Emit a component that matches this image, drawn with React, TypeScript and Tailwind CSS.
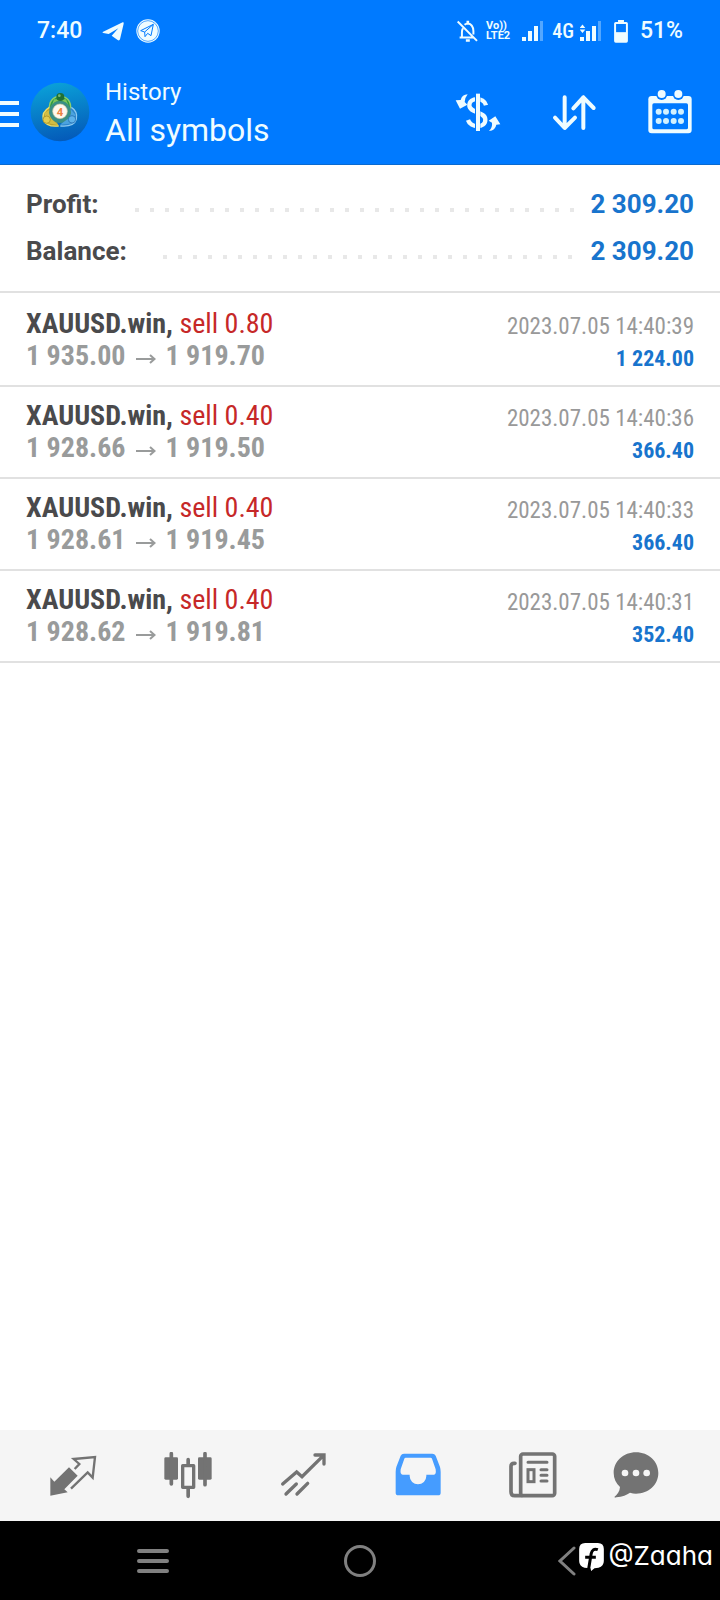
import type { ReactNode } from "react";
import { clsx } from "clsx";

type Deal = {
  symbol: string;
  side: string;
  open: string;
  close: string;
  time: string;
  profit: string;
};

const deals: Deal[] = [
  { symbol: "XAUUSD.win,", side: "sell 0.80", open: "1 935.00", close: "1 919.70", time: "2023.07.05 14:40:39", profit: "1 224.00" },
  { symbol: "XAUUSD.win,", side: "sell 0.40", open: "1 928.66", close: "1 919.50", time: "2023.07.05 14:40:36", profit: "366.40" },
  { symbol: "XAUUSD.win,", side: "sell 0.40", open: "1 928.61", close: "1 919.45", time: "2023.07.05 14:40:33", profit: "366.40" },
  { symbol: "XAUUSD.win,", side: "sell 0.40", open: "1 928.62", close: "1 919.81", time: "2023.07.05 14:40:31", profit: "352.40" },
];

const summary = [
  { label: "Profit:", value: "2 309.20" },
  { label: "Balance:", value: "2 309.20" },
];

function Icon({ children }: { children: ReactNode }) {
  return (
    <svg viewBox="0 0 144 144" className="size-12" fill="none" aria-hidden="true">
      {children}
    </svg>
  );
}

function Signal({ data = false }: { data?: boolean }) {
  return (
    <svg viewBox="0 0 22 20" className="h-5 w-[22px]" fill="currentColor" aria-hidden="true">
      <rect x="0" y="16" width="4" height="4" />
      <rect x="6" y="10" width="4" height="10" />
      <rect x="12" y="5" width="4" height="15" />
      <rect x="18" y="0" width="3" height="20" opacity="0.35" />
      {data && <path d="M2.5 3.5 5.3 7H-.3zM2.5 12 5.3 8.5H-.3z" />}
    </svg>
  );
}

function StatusBar() {
  return (
    <div className="flex h-[60px] items-center justify-between px-[37px] pt-0.5 text-[23px] font-medium">
      <div className="flex items-center">
        <span>7:40</span>
        <svg viewBox="0 0 66 60" className="ml-5 h-5 w-[22px]" fill="currentColor" aria-hidden="true">
          <path d="M2 33 62 4q4-1 3 4L54 55q-2 5-7 2L29 44l20-22-29 17L4 36q-4-1-2-3z" />
        </svg>
        <svg viewBox="0 0 72 72" className="ml-3 size-6" fill="none" aria-hidden="true">
          <circle cx="36" cy="36" r="35" fill="currentColor" />
          <circle cx="36" cy="36" r="31" stroke="#007aff" strokeWidth="2" />
          <path d="M14 35 52 16 45 50 35 43 27 53 26 39zM26 39 52 16" stroke="#007aff" strokeWidth="3" strokeLinejoin="round" />
        </svg>
      </div>
      <div className="flex items-center">
        <svg viewBox="0 0 64 66" className="h-[22px] w-[21px]" fill="none" stroke="currentColor" strokeWidth="6" aria-hidden="true">
          <path d="M2 4 61 63M18 25q-3 5-3 12v14M8 53h42M23 14q5-4 10-4 16 2 17 23v11" />
          <path d="M33 2v8M27 62h12" strokeWidth="8" />
        </svg>
        <span className="ml-2 flex flex-col text-[11px] leading-[10px] font-bold">
          <span>Vo))</span>
          <span>LTE2</span>
        </span>
        <span className="ml-3 flex items-center">
          <Signal />
        </span>
        <span className="ml-2 font-['Roboto_Condensed','Liberation_Sans_Narrow',Roboto,sans-serif] text-[20px]">4G</span>
        <span className="ml-1.5 flex items-center">
          <Signal data />
        </span>
        <svg viewBox="0 0 42 70" className="ml-3 h-[23px] w-3.5" fill="none" aria-hidden="true">
          <path d="M12 0h18v7H12z" fill="currentColor" />
          <rect x="3" y="9" width="36" height="57" rx="2" stroke="currentColor" strokeWidth="6" />
          <path d="M4 37h34v28H4z" fill="currentColor" />
        </svg>
        <span className="ml-3">51%</span>
      </div>
    </div>
  );
}

function Logo() {
  return (
    <svg viewBox="0 0 180 180" className="size-[60px]" aria-hidden="true">
      <defs>
        <linearGradient id="sea" x1="0.4" y1="0" x2="0.6" y2="1">
          <stop offset="0" stopColor="#0aa0d8" />
          <stop offset="1" stopColor="#0459b8" />
        </linearGradient>
      </defs>
      <circle cx="90" cy="90" r="88" fill="url(#sea)" />
      <path d="M58 84q-2-38 32-42 34 4 32 40" fill="#2f9a45" stroke="#8ccf6c" strokeWidth="4" />
      <path d="M58 76q-24 14-18 38 10 22 46 18" fill="#bda22b" stroke="#ecdd6a" strokeWidth="4" />
      <path d="M124 76q20 12 15 36-8 24-48 20" fill="#2c86cc" stroke="#8cc9f0" strokeWidth="4" />
      <circle cx="90" cy="90" r="33" fill="#3a8f86" />
      <path d="M68 114Q54 100 58 84l-14 8 2 30 40 8z" fill="#d2bd45" />
      <path d="M112 112q14-8 10-30l14 16-4 26-42 4z" fill="#4ba3df" />
      <path d="M64 76q4-20 26-20t28 20l-10-24H72z" fill="#7cc45e" />
      <circle cx="91" cy="45" r="12" fill="#1f7034" />
      <circle cx="88" cy="41" r="4" fill="#79b974" />
      <circle cx="50" cy="113" r="11" fill="#e2cc50" stroke="#9c8420" strokeWidth="2" />
      <circle cx="126" cy="112" r="11" fill="#5eb2ea" stroke="#1c64a8" strokeWidth="2" />
      <circle cx="90" cy="88" r="22" fill="#fff8ee" stroke="#cfc8a0" strokeWidth="2" />
      <text x="90" y="101" textAnchor="middle" fontSize="34" fontWeight="700" fontFamily="Roboto" fill="#ef8140">
        4
      </text>
    </svg>
  );
}

function AppBar() {
  return (
    <div className="flex h-[104px] items-center">
      <button type="button" aria-label="Open menu" className="flex w-[30px] flex-col gap-[7px] pt-1">
        <span className="h-1 w-[19px] bg-current" />
        <span className="h-1 w-[19px] bg-current" />
        <span className="h-1 w-[19px] bg-current" />
      </button>
      <Logo />
      <div className="ml-[15px] flex-1 pt-1">
        <p className="text-[24px] leading-8">History</p>
        <h1 className="text-[32px] leading-11">All symbols</h1>
      </div>
      <div className="mr-0.5 flex">
        <button type="button" aria-label="Filter by symbol" className="flex w-24 justify-center">
          <Icon>
            <path d="M96 52C90 26 46 28 46 52c0 23 48 19 48 43 0 26-44 26-52 1" stroke="currentColor" strokeWidth="13" />
            <path d="M71 14v118" stroke="#007aff" strokeWidth="16" />
            <path d="M72 17v112" stroke="currentColor" strokeWidth="12" />
            <path d="M41 19Q24 20 20 36L5 37 18 62 40 50 32 42Q32 30 41 19zM104 98 124 85 139 109 127 110Q124 127 105 129 116 118 114 104z" fill="currentColor" />
          </Icon>
        </button>
        <button type="button" aria-label="Sort" className="flex w-24 justify-center">
          <Icon>
            <path d="M44 28v90M15 89l29 31 31-31M100 120V28M70 61l30-33 31 32" stroke="currentColor" strokeWidth="12" strokeLinecap="round" strokeLinejoin="round" />
          </Icon>
        </button>
        <button type="button" aria-label="Period" className="flex w-24 justify-center">
          <Icon>
            <rect x="7" y="24" width="130" height="112" rx="10" fill="currentColor" />
            <rect x="19" y="46" width="107" height="78" rx="5" fill="#007aff" />
            {[47, 97].map((x) => (
              <g key={x}>
                <circle cx={x} cy="19" r="17" fill="#007aff" />
                <circle cx={x} cy="18" r="12" fill="currentColor" />
              </g>
            ))}
            {[38, 60, 83, 105].map((x) => (
              <g key={x} fill="#d2f1ff">
                <circle cx={x} cy="71" r="9" />
                <circle cx={x} cy="99" r="9" />
              </g>
            ))}
          </Icon>
        </button>
      </div>
    </div>
  );
}

function DealRow({ deal }: { deal: Deal }) {
  return (
    <li className="flex h-[92px] items-center justify-between border-b-2 border-[#e1e1e1] px-[26px] font-['Roboto_Condensed','Liberation_Sans_Narrow',Roboto,sans-serif]">
      <div className="text-[28px] leading-8">
        <p className="font-bold text-[#4a4a4c]">
          {deal.symbol} <span className="font-normal text-[#c62828]">{deal.side}</span>
        </p>
        <p className="flex items-center font-bold text-[#999b9b]">
          {deal.open}
          <svg viewBox="0 0 20 12" className="mx-2.5 mt-1.5 h-3 w-5" fill="none" stroke="currentColor" strokeWidth="2" aria-hidden="true">
            <path d="M0 6h18M14 2 18.500 6 14 10" />
          </svg>
          {deal.close}
        </p>
      </div>
      <div className="pt-1.5 text-right leading-8">
        <p className="text-[23px] text-[#999]">{deal.time}</p>
        <p className="text-[22px] font-bold text-[#1874cd]">{deal.profit}</p>
      </div>
    </li>
  );
}

const tabs: { label: string; active?: boolean; icon: ReactNode }[] = [
  {
    label: "Quotes",
    icon: (
      <>
        <path d="M4 76 16 89 60 46 86 71 46 112 56 121 4 131z" fill="currentColor" />
        <path d="M77 51 91 36 74 21 138 15 131 77 116 61 66 110" stroke="currentColor" strokeWidth="7" />
      </>
    ),
  },
  {
    label: "Charts",
    icon: (
      <>
        <rect x="1" y="16" width="41" height="67" rx="4" fill="currentColor" />
        <rect x="102" y="16" width="41" height="67" rx="4" fill="currentColor" />
        <rect x="56" y="41" width="33" height="65" stroke="currentColor" strokeWidth="10" strokeLinejoin="round" />
        <path d="M22 5v91M123 5v93M72.500 23v16M72.500 108v25" stroke="currentColor" strokeWidth="11" strokeLinecap="round" />
      </>
    ),
  },
  {
    label: "Trade",
    icon: (
      <path d="M11 96 53 60 69 74 133 11M108 9h27v27M21 126 52 96M54 126 86 94" stroke="currentColor" strokeWidth="10" strokeLinecap="round" />
    ),
  },
  {
    label: "History",
    active: true,
    icon: (
      <path
        fillRule="evenodd"
        fill="currentColor"
        d="M30 5H115Q122 5 125 11L138 45Q140 52 140 60V122Q140 130 132 130H13Q5 130 5 122V60Q5 52 7 45L20 11Q23 5 30 5zM35 17H110Q113 17 114 20L125 52Q127 68 120 68H97V72A25 25 0 0 1 47 72V68H26Q18 68 20 52L31 20Q32 17 35 17z"
      />
    ),
  },
  {
    label: "News",
    icon: (
      <g stroke="currentColor" strokeLinecap="round" strokeWidth="11">
        <rect x="35" y="6" width="102" height="125" rx="7" />
        <path d="M18 34h-3q-9 0-9 9v76q0 12 11 12h20" />
        <path d="M57 31h57M96 53h18M96 70h18M96 87h18" strokeWidth="9" />
        <rect x="57" y="53" width="18" height="36" strokeWidth="9" />
      </g>
    ),
  },
  {
    label: "Messages",
    icon: (
      <>
        <path d="M72 1C34 1 5 28 5 63c0 17 7 31 19 42-1 14-8 23-17 30 2 2 4 2 6 1 18-2 32-7 41-14 6 2 12 3 18 3 38 0 67-27 67-62S110 1 72 1z" fill="currentColor" />
        <g fill="#f5f5f5">
          <circle cx="39" cy="63" r="10" />
          <circle cx="72" cy="63" r="10" />
          <circle cx="104" cy="63" r="10" />
        </g>
      </>
    ),
  },
];

function TabBar() {
  return (
    <nav className="grid h-[91px] grid-cols-[repeat(5,5fr)_4fr] bg-[#f5f5f5] pr-[38px] pl-[15px]">
      {tabs.map(({ label, active, icon }) => (
        <button
          key={label}
          type="button"
          aria-label={label}
          className={clsx("flex items-center justify-center", active ? "text-[#459cff]" : "text-[#737373]")}
        >
          <Icon>{icon}</Icon>
        </button>
      ))}
    </nav>
  );
}

function SystemNav() {
  return (
    <div className="relative grid h-[79px] grid-cols-3 items-center bg-black px-[50px] text-[#808080]">
      <button type="button" aria-label="Recent apps" className="flex justify-center">
        <svg viewBox="0 0 32 32" className="size-8" stroke="currentColor" strokeWidth="4" strokeLinecap="round" aria-hidden="true">
          <path d="M2 6h28M2 16h28M2 26h28" />
        </svg>
      </button>
      <button type="button" aria-label="Home" className="flex justify-center">
        <span className="size-8 rounded-full border-3 border-current" />
      </button>
      <button type="button" aria-label="Back" className="flex justify-center">
        <svg viewBox="0 0 18 30" className="h-[30px] w-[18px]" fill="none" stroke="currentColor" strokeWidth="3" strokeLinecap="round" aria-hidden="true">
          <path d="M16 2 2 15l14 13" />
        </svg>
      </button>
      <div className="absolute top-3 right-[7px] flex h-11 items-center gap-1 text-white">
        <svg viewBox="0 0 74 84" className="mt-1 h-7 w-[25px]" aria-hidden="true">
          <path d="M18 0H56Q74 0 74 18V54Q74 70 58 74L46 76 36 84 34 76 16 74Q0 70 0 54V18Q0 0 18 0z" fill="currentColor" />
          <path d="M56 20q-16-6-20 12l-8 48M18 43h32" fill="none" stroke="#000" strokeWidth="9" />
        </svg>
        <span className="font-[Inter,sans-serif] text-[26px] [font-feature-settings:'cv11']">@Zaaha</span>
      </div>
    </div>
  );
}

export default function App() {
  return (
    <div className="flex min-h-screen flex-col bg-white font-[Roboto,sans-serif]">
      <header className="border-b border-[#0a6ad0] bg-[#007aff] text-[#effcff]">
        <StatusBar />
        <AppBar />
      </header>

      <main className="flex-1">
        <dl className="border-b-2 border-[#e1e1e1] pt-4 pb-4 text-[26px] font-bold">
          {summary.map(({ label, value }) => (
            <div key={label} className="flex h-[47px] items-center px-[26px]">
              <dt className="text-[#4a4a4c]">{label}</dt>
              <dd className="flex flex-1 items-center text-[#1874cd]">
                <span className="mt-2.5 mr-4 ml-9 h-1 flex-1 bg-[linear-gradient(to_right,#e8e8e8_4px,transparent_4px)] bg-[length:15px_4px]" />
                {value}
              </dd>
            </div>
          ))}
        </dl>
        <ul className="pt-0.5">
          {deals.map((deal) => (
            <DealRow key={deal.time} deal={deal} />
          ))}
        </ul>
      </main>

      <TabBar />
      <SystemNav />
    </div>
  );
}
